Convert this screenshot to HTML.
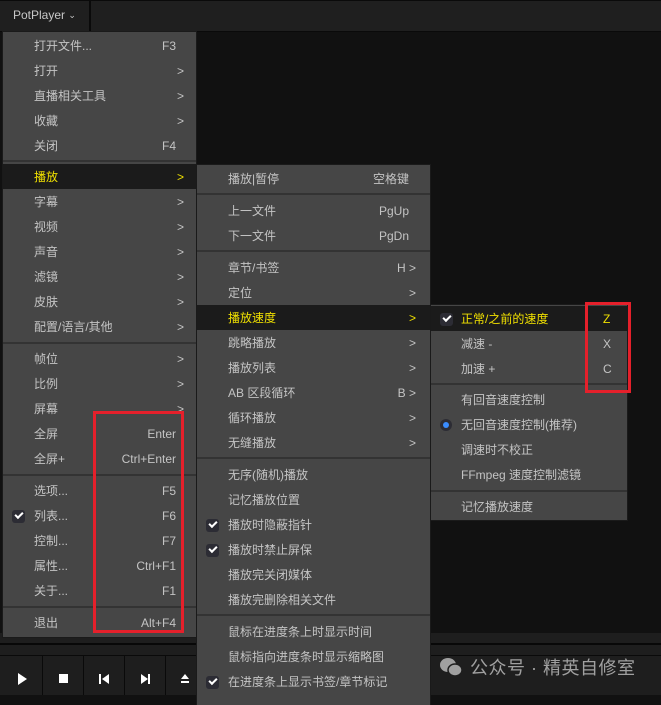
<!DOCTYPE html>
<html><head><meta charset="utf-8"><style>
*{margin:0;padding:0;box-sizing:border-box}
body{width:661px;height:695px;background:#111;position:relative;overflow:hidden;font-family:"Liberation Sans","Noto Sans CJK SC",sans-serif;font-size:12px;color:#c4c4c4}
.abs{position:absolute}
.menu{position:absolute;background:#464646;box-shadow:0 0 0 1px #1a1a1a}
.r{position:absolute;left:0;right:0;height:25px;line-height:27px;white-space:nowrap}
.r .t{position:absolute}
.r .k{position:absolute;text-align:right}
.hl{background:#1b1b1b;color:#f0e000}
.sep{position:absolute;left:0;right:0;height:2px;background:#333}
.ck{position:absolute;width:13px;height:13px;border-radius:3px;background:#2c2c34;top:7px}
.ck:after{content:"";position:absolute;left:3px;top:2px;width:6px;height:3px;border-left:2px solid #fff;border-bottom:2px solid #fff;transform:rotate(-45deg)}
.m1 .t{left:31px}.m1 .k{right:20px}.m1 .ck{left:9px}
.m2 .t{left:31px}.m2 .k{right:21px}.m2 .ck{left:9px}
.m3 .t{left:30px}.m3 .ck{left:9px}
.red{position:absolute;border:3px solid #e5202b}
</style></head><body>
<div class="abs" style="left:0;top:0;width:661px;height:32px;background:#1f1f1f;border-top:1px solid #0a0a0a;border-bottom:1px solid #0a0a0a"></div>
<div class="abs" style="left:89px;top:0;width:2px;height:32px;background:#0a0a0a"></div>
<div class="abs" style="left:13px;top:8px;color:#c8c8c8;font-size:12px">PotPlayer <span style="font-size:9px;position:relative;top:-1px">&#8964;</span></div>

<div class="abs" style="left:0;top:633px;width:661px;height:22px;background:#1e1e1e"></div>
<div class="abs" style="left:0;top:643px;width:661px;height:2px;background:#080808"></div>
<div class="abs" style="left:0;top:655px;width:661px;height:40px;background:#1e1e1e;border-top:1px solid #0a0a0a"></div>
<div class="abs" style="left:42px;top:655px;width:1px;height:40px;background:#0a0a0a"></div>
<div class="abs" style="left:83px;top:655px;width:1px;height:40px;background:#0a0a0a"></div>
<div class="abs" style="left:124px;top:655px;width:1px;height:40px;background:#0a0a0a"></div>
<div class="abs" style="left:165px;top:655px;width:1px;height:40px;background:#0a0a0a"></div>
<svg class="abs" style="left:0;top:655px" width="200" height="40">
<polygon points="18,19 18,31 27,25" fill="#fff" transform="translate(0,-1)"/>
<rect x="59" y="19" width="9" height="9" fill="#fff"/>
<rect x="99" y="19" width="2" height="10" fill="#fff"/><polygon points="109,19 109,29 102,24" fill="#fff"/>
<polygon points="141,19 141,29 148,24" fill="#fff"/><rect x="148" y="19" width="2" height="10" fill="#fff"/>
<polygon points="181,24 185,19 189,24" fill="#fff"/><rect x="181" y="26" width="8" height="2" fill="#fff"/>
</svg>
<svg class="abs" style="left:438px;top:656px" width="30" height="22">
<ellipse cx="10" cy="9" rx="8" ry="7" fill="#a0a0a0"/>
<ellipse cx="17" cy="14" rx="7" ry="6" fill="#a0a0a0" stroke="#1e1e1e" stroke-width="1.5"/>
</svg>
<div class="abs" style="left:470px;top:654px;font-size:18px;color:#a0a0a0;letter-spacing:0.5px">公众号 · 精英自修室</div>

<div class="menu m1" style="left:3px;top:32px;width:193px;height:605px">
<div class="r" style="top:1px"><span class="t">打开文件...</span><span class="k">F3</span></div>
<div class="r" style="top:26px"><span class="t">打开</span><span class="k" style="right:12px">&gt;</span></div>
<div class="r" style="top:51px"><span class="t">直播相关工具</span><span class="k" style="right:12px">&gt;</span></div>
<div class="r" style="top:76px"><span class="t">收藏</span><span class="k" style="right:12px">&gt;</span></div>
<div class="r" style="top:101px"><span class="t">关闭</span><span class="k">F4</span></div>
<div class="sep" style="top:128px"></div>
<div class="r hl" style="top:132px"><span class="t">播放</span><span class="k" style="right:12px">&gt;</span></div>
<div class="r" style="top:157px"><span class="t">字幕</span><span class="k" style="right:12px">&gt;</span></div>
<div class="r" style="top:182px"><span class="t">视频</span><span class="k" style="right:12px">&gt;</span></div>
<div class="r" style="top:207px"><span class="t">声音</span><span class="k" style="right:12px">&gt;</span></div>
<div class="r" style="top:232px"><span class="t">滤镜</span><span class="k" style="right:12px">&gt;</span></div>
<div class="r" style="top:257px"><span class="t">皮肤</span><span class="k" style="right:12px">&gt;</span></div>
<div class="r" style="top:282px"><span class="t">配置/语言/其他</span><span class="k" style="right:12px">&gt;</span></div>
<div class="sep" style="top:310px"></div>
<div class="r" style="top:314px"><span class="t">帧位</span><span class="k" style="right:12px">&gt;</span></div>
<div class="r" style="top:339px"><span class="t">比例</span><span class="k" style="right:12px">&gt;</span></div>
<div class="r" style="top:364px"><span class="t">屏幕</span><span class="k" style="right:12px">&gt;</span></div>
<div class="r" style="top:389px"><span class="t">全屏</span><span class="k">Enter</span></div>
<div class="r" style="top:414px"><span class="t">全屏+</span><span class="k">Ctrl+Enter</span></div>
<div class="sep" style="top:442px"></div>
<div class="r" style="top:446px"><span class="t">选项...</span><span class="k">F5</span></div>
<div class="r" style="top:471px"><span class="ck"></span><span class="t">列表...</span><span class="k">F6</span></div>
<div class="r" style="top:496px"><span class="t">控制...</span><span class="k">F7</span></div>
<div class="r" style="top:521px"><span class="t">属性...</span><span class="k">Ctrl+F1</span></div>
<div class="r" style="top:546px"><span class="t">关于...</span><span class="k">F1</span></div>
<div class="sep" style="top:574px"></div>
<div class="r" style="top:578px"><span class="t">退出</span><span class="k">Alt+F4</span></div>
</div>

<div class="menu m2" style="left:197px;top:165px;width:233px;height:540px">
<div class="r" style="top:1px"><span class="t">播放|暂停</span><span class="k">空格键</span></div>
<div class="sep" style="top:28px"></div>
<div class="r" style="top:33px"><span class="t">上一文件</span><span class="k">PgUp</span></div>
<div class="r" style="top:58px"><span class="t">下一文件</span><span class="k">PgDn</span></div>
<div class="sep" style="top:85px"></div>
<div class="r" style="top:90px"><span class="t">章节/书签</span><span class="k" style="right:14px">H &gt;</span></div>
<div class="r" style="top:115px"><span class="t">定位</span><span class="k" style="right:14px">&gt;</span></div>
<div class="r hl" style="top:140px"><span class="t">播放速度</span><span class="k" style="right:14px">&gt;</span></div>
<div class="r" style="top:165px"><span class="t">跳略播放</span><span class="k" style="right:14px">&gt;</span></div>
<div class="r" style="top:190px"><span class="t">播放列表</span><span class="k" style="right:14px">&gt;</span></div>
<div class="r" style="top:215px"><span class="t">AB 区段循环</span><span class="k" style="right:14px">B &gt;</span></div>
<div class="r" style="top:240px"><span class="t">循环播放</span><span class="k" style="right:14px">&gt;</span></div>
<div class="r" style="top:265px"><span class="t">无缝播放</span><span class="k" style="right:14px">&gt;</span></div>
<div class="sep" style="top:292px"></div>
<div class="r" style="top:297px"><span class="t">无序(随机)播放</span></div>
<div class="r" style="top:322px"><span class="t">记忆播放位置</span></div>
<div class="r" style="top:347px"><span class="ck"></span><span class="t">播放时隐蔽指针</span></div>
<div class="r" style="top:372px"><span class="ck"></span><span class="t">播放时禁止屏保</span></div>
<div class="r" style="top:397px"><span class="t">播放完关闭媒体</span></div>
<div class="r" style="top:422px"><span class="t">播放完删除相关文件</span></div>
<div class="sep" style="top:449px"></div>
<div class="r" style="top:454px"><span class="t">鼠标在进度条上时显示时间</span></div>
<div class="r" style="top:479px"><span class="t">鼠标指向进度条时显示缩略图</span></div>
<div class="r" style="top:504px"><span class="ck"></span><span class="t">在进度条上显示书签/章节标记</span></div>
</div>

<div class="menu m3" style="left:431px;top:305px;width:196px;height:215px">
<div class="r hl" style="top:1px"><span class="ck"></span><span class="t">正常/之前的速度</span><span class="k" style="left:172px">Z</span></div>
<div class="r" style="top:26px"><span class="t">减速 -</span><span class="k" style="left:172px">X</span></div>
<div class="r" style="top:51px"><span class="t">加速 +</span><span class="k" style="left:172px">C</span></div>
<div class="sep" style="top:78px"></div>
<div class="r" style="top:82px"><span class="t">有回音速度控制</span></div>
<div class="r" style="top:107px"><span style="position:absolute;left:9px;top:7px;width:12px;height:12px;border-radius:50%;background:#2c2c34"></span><span style="position:absolute;left:12px;top:10px;width:6px;height:6px;border-radius:50%;background:#3a8cff"></span><span class="t">无回音速度控制(推荐)</span></div>
<div class="r" style="top:132px"><span class="t">调速时不校正</span></div>
<div class="r" style="top:157px"><span class="t">FFmpeg 速度控制滤镜</span></div>
<div class="sep" style="top:185px"></div>
<div class="r" style="top:189px"><span class="t">记忆播放速度</span></div>
</div>

<div class="red" style="left:93px;top:411px;width:91px;height:222px"></div>
<div class="red" style="left:585px;top:302px;width:46px;height:91px"></div>
</body></html>
